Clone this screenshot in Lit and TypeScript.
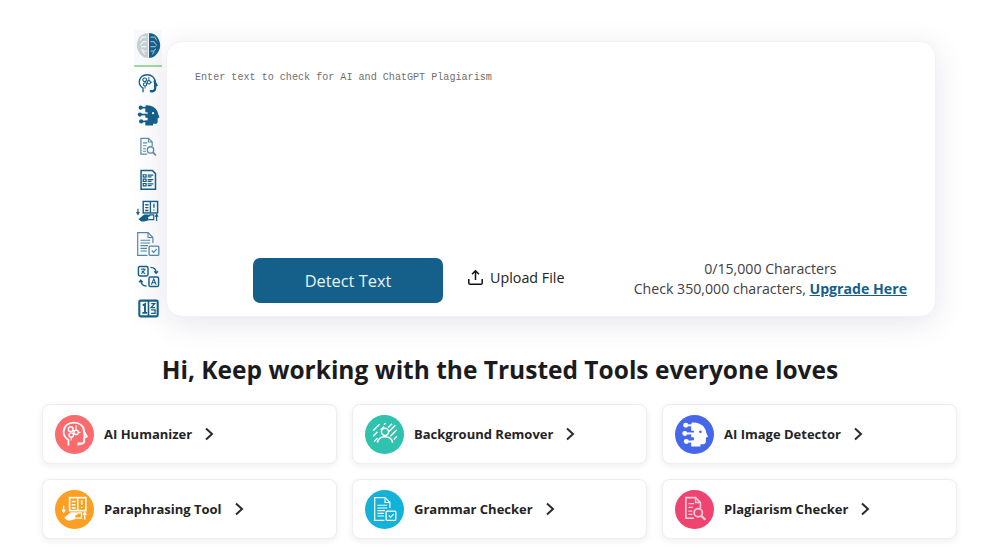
import { LitElement, html, css, svg } from "lit";
import { customElement } from "lit/decorators.js";

const C = "#15608a";

const head = (c: string, heavy = 1.8) => svg`
  <path d="M6 22.500V17.500C3 15.700 1.500 13 1.500 10.200 1.500 5 5.600 1.500 11 1.500s9.500 3.400 9.500 8.400l2.400 4.400-2.400.8v3.600c0 1.200-1 2-2.200 2H15v1.800" fill="none" stroke="${c}" stroke-width="1.600"/>
  <circle cx="8" cy="7.500" r="2.200" fill="none" stroke="${c}" stroke-width="1.300"/>
  <circle cx="8.500" cy="13" r="2" fill="none" stroke="${c}" stroke-width="1.300"/>
  <circle cx="13" cy="10.500" r="2" fill="none" stroke="${c}" stroke-width="1.300"/>
  <path d="M10 8.500l1.500 1M10.300 12l1-.8M8.500 15v3M13 4v4.500M15 10.500h2" fill="none" stroke="${c}" stroke-width="1.100"/>
  <path d="M15.500 21.500c2.800 0 4.500-1 5-3 .4-1.700.2-8.500-.8-10.500" fill="none" stroke="${c}" stroke-width="${heavy * 1.5}"/>`;

const robot = (c: string, eye: string) => svg`
  <path d="M9 1.500c6-1 13 3 13.500 9.500l1.500 3.500-2 1v3.500c0 1.500-1 2.500-2.500 2.500H17v2H8.500v-5.500H11v-3H8.500v-3H11V9H8.500V3.500Z" fill="${c}"/>
  <circle cx="17" cy="10" r="1.200" fill="${eye}"/>
  <circle cx="3.500" cy="4" r="2.300" fill="${c}"/><path d="M5 4h6" stroke="${c}" stroke-width="1.800"/>
  <circle cx="2.600" cy="11.500" r="2.300" fill="${c}"/><path d="M4 11.500h7" stroke="${c}" stroke-width="1.800"/>
  <circle cx="4" cy="19" r="2.300" fill="${c}"/><path d="M5.500 19H11" stroke="${c}" stroke-width="1.800"/>`;

const docSearch = (c: string) => svg`
  <path d="M17 11V6l-4.500-4.500H3.500V20.500H11" fill="none" stroke="${c}" stroke-width="1.500"/>
  <path d="M12.500 1.500V6H17M6 7h5M6 10.500h4M6 14h3.500M6 17h3.500" fill="none" stroke="${c}" stroke-width="1.300"/>
  <circle cx="15" cy="15.500" r="3.800" fill="none" stroke="${c}" stroke-width="1.600"/>
  <path d="M18 18.500l3.500 3.500" stroke="${c}" stroke-width="2"/>`;

const docList = (c: string) => svg`
  <path d="M3.500 1.200h13l3.500 3.500v18H3.500Z" fill="none" stroke="${c}" stroke-width="1.700"/>
  <path d="M6 6h3.200v2.700H6ZM6 11h3.200v2.700H6ZM6 16h3.200v2.700H6ZM11 6.500h6.500M11 8.500h4.500M11 11.500h6.500M11 13.500h4.500M11 16.500h6.500M11 18.500h4.500" fill="none" stroke="${c}" stroke-width="1.400"/>`;

const para = (c: string) => svg`
  <rect x="7" y="1.500" width="15" height="12" fill="none" stroke="${c}" stroke-width="1.500"/>
  <path d="M14.500 1.500v12M9 5h3.500M9 8h3.500M9 11h3.500M18.200 4v4M18.200 10v1" stroke="${c}" stroke-width="1.400" fill="none"/>
  <path d="M1.500 9v5.500M0 12.500l1.500 2.500 1.500-2.500M21 22v-6.500M19.500 17.500l1.500-2.500 1.500 2.500" stroke="${c}" stroke-width="1.200" fill="none"/>
  <path d="M2 20l6-5h4l3 1.500-3 1.500 1 3-5 1.500H5Z" fill="${c}"/>
  <path d="M13 15.500h5v5h-5" fill="none" stroke="${c}" stroke-width="1.200"/>`;

const grammar = (c: string) => svg`
  <path d="M16.500 11V6L12 1.500H2.500v21h9" fill="none" stroke="${c}" stroke-width="1.100"/>
  <path d="M12 1.500V6h4.500M5 8.500h9M5 11h9M5 13.500h7M5 16h6M5 18.500h6" fill="none" stroke="${c}" stroke-width="1"/>
  <rect x="13" y="14" width="9" height="8.500" rx="1" fill="none" stroke="${c}" stroke-width="1.200"/>
  <path d="M15.500 18l1.700 1.700 2.800-3" fill="none" stroke="${c}" stroke-width="1.100"/>`;

const translate = (c: string) => svg`
  <rect x="1.500" y="1.500" width="10" height="10" rx="1.500" fill="none" stroke="${c}" stroke-width="1.500"/>
  <rect x="12.500" y="12.500" width="10" height="10" rx="1.500" fill="none" stroke="${c}" stroke-width="1.500"/>
  <path d="M4 4.500h5M6.500 3.500v1.500M8 4.500c-.5 2-2 3.500-3.500 4.500M5 6c.8 1.500 2 2.500 3.500 3" fill="none" stroke="${c}" stroke-width="1.100"/>
  <path d="M15 20.500l2.500-6 2.500 6M16 18.500h3" fill="none" stroke="${c}" stroke-width="1.200"/>
  <path d="M14 2.500c3.500 0 6 2 6 6M18 6.500l2 2.200 2-2.200M10 22c-3.500 0-6-2-6-6M2 18l2-2.200 2 2.200" fill="none" stroke="${c}" stroke-width="1.300"/>`;

const numbers = (c: string) => svg`
  <rect x="1.500" y="3" width="21" height="18" rx="1.500" fill="none" stroke="${c}" stroke-width="2.400"/>
  <path d="M12 3v18" stroke="${c}" stroke-width="1.800"/>
  <path d="M5.500 8.500l2.500-1.500v10M5 17h5.500" fill="none" stroke="${c}" stroke-width="2.200"/>
  <path d="M15 6.500h4L15 11h4.500M15 13.500h4.500v4H15" fill="none" stroke="${c}" stroke-width="1.500"/>`;

const bg = (c: string) => svg`
  <circle cx="12" cy="10" r="3.300" fill="none" stroke="${c}" stroke-width="1.400"/>
  <path d="M5 20c.5-3.500 3.500-5.500 7-5.500s6.500 2 7 5.500" fill="none" stroke="${c}" stroke-width="1.400"/>
  <path d="M1 9l6-6M1 14l4-4M2 19l3-3M8 8l3-3M11 3.500l1.500-1.500M15 6l3.500-3.500M15.500 10l6-6M17 14l6-6M20 17l3-3" stroke="${c}" stroke-width="1.300" fill="none"/>`;

const brain = svg`
  <path d="M12 .8C7 .8 2.800 3.500 1.800 7.500.5 10 .3 14 2 16.500c1.500 3.500 5 6.700 10 6.700Z" fill="#c3cfd6"/>
  <path d="M12 .8c5 0 9.200 2.700 10.200 6.700 1.300 2.500 1.500 6.500-.2 9-1.500 3.500-5 6.700-10 6.700Z" fill="#15608a"/>
  <path d="M12 .8v22.400" stroke="#f4f7f8" stroke-width="1"/>
  <path d="M14 4.500h4l2 3M14 8.500h3l3 3.500M14 13h5M14 17h3l2-2M15.500 20l2-2.500" fill="none" stroke="#8fb8cf" stroke-width="1"/>
  <path d="M10 4.500H6l-2 3M10 8.500H7l-3 3.500M10 13H5M10 17H7l-2-2M8.500 20l-2-2.500" fill="none" stroke="#f4f7f8" stroke-width="1"/>`;

const sideIcons = [
  { g: head(C), w: 20, h: 21 },
  { g: robot(C, "#fff"), w: 23, h: 22 },
  { g: docSearch("#5e8ea8"), w: 20, h: 20 },
  { g: docList(C), w: 21, h: 22 },
  { g: para(C), w: 24, h: 23 },
  { g: grammar("#4f88a6"), w: 26, h: 26 },
  { g: translate(C), w: 23, h: 23 },
  { g: numbers(C), w: 21, h: 21 },
];

const tools = [
  { name: "AI Humanizer", color: "#fb6a6c", g: head("#fff", 1) },
  { name: "Background Remover", color: "#2fc2ae", g: bg("#fff") },
  { name: "AI Image Detector", color: "#4667ea", g: robot("#fff", "#4667ea") },
  { name: "Paraphrasing Tool", color: "#fd9f22", g: para("#fff") },
  { name: "Grammar Checker", color: "#14b2d8", g: grammar("#fff") },
  { name: "Plagiarism Checker", color: "#ef4470", g: docSearch("#ffd0dc") },
];

@customElement("app-root")
export class AppRoot extends LitElement {
  static styles = css`
    :host {
      display: block;
      width: 1000px;
      height: 551px;
      overflow: hidden;
      background: #fff;
      font-family: "Open Sans", "Noto Sans", sans-serif;
      color: #1d1d1f;
    }
    .top {
      display: flex;
      align-items: flex-start;
      padding: 30px 0 0 134px;
    }
    .side {
      width: 28px;
      display: flex;
      flex-direction: column;
      align-items: center;
      height: 293px;
      flex: none;
      background: #fdfdfe;
    }
    .side .active {
      width: 100%;
      height: 37px;
      flex: none;
      border-bottom: 2px solid #a5d6a0;
      background: #f8f9fa;
      display: flex;
      align-items: flex-start;
      justify-content: center;
      box-sizing: border-box;
      padding-top: 2px;
    }
    .side .slot {
      height: 32.2px;
      flex: none;
      display: flex;
      align-items: center;
      justify-content: center;
    }
    .card {
      margin: 11px 0 0 4px;
      width: 770px;
      height: 276px;
      box-sizing: border-box;
      background: #fff;
      border-radius: 16px;
      border: 1px solid #f1f2f4;
      box-shadow: 0 6px 30px rgba(60, 65, 110, 0.13);
      padding: 29px 28px 13px 28px;
      display: flex;
      flex-direction: column;
      justify-content: space-between;
    }
    .placeholder {
      font-family: "Liberation Mono", monospace;
      font-size: 10.1px;
      line-height: 14px;
      color: #6f6f6f;
    }
    .actions {
      display: flex;
      align-items: center;
    }
    .detect {
      margin-left: 58px;
      width: 190px;
      height: 45px;
      border: 0;
      border-radius: 7px;
      background: #15608a;
      color: #e9f3f8;
      font: 400 16.4px "Open Sans", sans-serif;
    }
    .upload {
      margin-left: 24px;
      display: flex;
      align-items: center;
      gap: 6px;
      font-size: 14.3px;
      color: #222;
      position: relative;
      top: -3px;
    }
    .count {
      margin-left: auto;
      text-align: center;
      font-size: 14.15px;
      line-height: 20.5px;
      color: #3f4044;
      position: relative;
      top: -1.5px;
    }
    .count a {
      color: #15608a;
      font-weight: 700;
      text-decoration: underline;
    }
    h1 {
      margin: 29px 0 0;
      text-align: center;
      font-size: 24.5px;
      line-height: 36px;
      font-weight: 700;
      color: #1b1b1d;
    }
    .grid {
      margin: 16px 0 0 42px;
      width: 915px;
      display: grid;
      grid-template-columns: repeat(3, 295px);
      grid-auto-rows: 60px;
      column-gap: 15px;
      row-gap: 15px;
    }
    .tool {
      box-sizing: border-box;
      border: 1px solid #eceef0;
      border-radius: 8px;
      background: #fff;
      box-shadow: 0 2px 6px rgba(40, 40, 70, 0.08);
      display: flex;
      align-items: center;
      padding-left: 12px;
      font-size: 13px;
      font-weight: 700;
      color: #242426;
    }
    .dot {
      width: 39px;
      height: 39px;
      border-radius: 50%;
      display: flex;
      align-items: center;
      justify-content: center;
      margin-right: 10px;
      flex: none;
    }
    .chev {
      margin-left: 11px;
      flex: none;
    }
  `;

  render() {
    return html`
      <div class="top">
        <nav class="side">
          <div class="active"><svg width="25" height="27" viewBox="0 0 24 24" preserveAspectRatio="none">${brain}</svg></div>
          ${sideIcons.map(
            (i) => html`<div class="slot"><svg width=${i.w} height=${i.h} viewBox="0 0 24 24">${i.g}</svg></div>`
          )}
        </nav>
        <section class="card">
          <div class="placeholder">Enter text to check for AI and ChatGPT Plagiarism</div>
          <div class="actions">
            <button class="detect">Detect Text</button>
            <div class="upload">
              <svg width="17" height="17" viewBox="0 0 17 17" fill="none" stroke="#111" stroke-width="1.5">
                <path d="M8.500 11V2M5 5.200 8.500 1.800 12 5.200M1.800 10v4c0 .8.500 1.300 1.300 1.300h10.800c.8 0 1.300-.5 1.300-1.300v-4" />
              </svg>
              Upload File
            </div>
            <div class="count">
              0/15,000 Characters<br />Check 350,000 characters, <a>Upgrade Here</a>
            </div>
          </div>
        </section>
      </div>
      <h1>Hi, Keep working with the Trusted Tools everyone loves</h1>
      <div class="grid">
        ${tools.map(
          (t) => html`<div class="tool">
            <span class="dot" style="background:${t.color}"><svg width="26" height="26" viewBox="0 0 24 24">${t.g}</svg></span>
            <span>${t.name}</span>
            <svg class="chev" width="12" height="14" viewBox="0 0 12 14" fill="none" stroke="#2b2b2d" stroke-width="2"><path d="M3 1.500 9 7l-6 5.500" /></svg>
          </div>`
        )}
      </div>
    `;
  }
}
